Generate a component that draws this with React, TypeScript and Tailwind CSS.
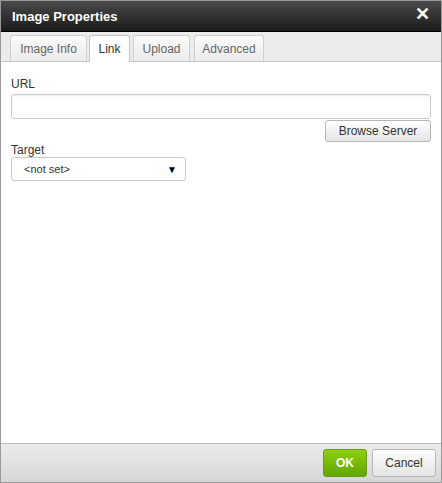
import React from 'react';

const tabs: Array<[string, string]> = [
    ['Image Info', 'w-[77px]'],
    ['Link', 'w-[41px] ml-[2px]'],
    ['Upload', 'w-[57px] ml-[3px]'],
    ['Advanced', 'w-[70px] ml-[4px]'],
];

const App: React.FC = () => (
    <div className="w-[442px] h-[483px] flex flex-col bg-white border border-[#999] font-['Liberation_Sans',Arial,sans-serif] text-[12px] text-[#333] overflow-hidden">
        {/* title */}
        <div className="h-[31px] shrink-0 flex items-center justify-between pl-[11px] pr-[11px] bg-gradient-to-b from-[#4a4a4a] to-[#1c1c1c] border-b border-black">
            <span className="text-white font-bold text-[13px] mt-[1px]">Image Properties</span>
            <span className="text-white font-bold text-[18px] leading-none -mt-[5px]">✕</span>
        </div>
        {/* tabs */}
        <div className="h-[30px] shrink-0 bg-[#ebebeb] border-b border-[#c6c6c6] flex items-end pl-[9px]">
            {tabs.map(([t, w]) => (
                <div
                    key={t}
                    className={
                        t === 'Link'
                            ? `${w} h-[27px] -mb-px justify-center flex items-center bg-white border border-b-0 border-[#c6c6c6] rounded-t-[3px] text-[#333]`
                            : `${w} h-[26px] justify-center flex items-center bg-gradient-to-b from-[#fafafa] to-[#ececec] border border-b-0 border-[#d0d0d0] rounded-t-[3px] text-[#666]`
                    }
                >
                    {t}
                </div>
            ))}
        </div>
        {/* body */}
        <div className="flex-1 bg-white px-[10px] pt-[15px] flex flex-col">
            <label className="leading-[15px] mb-[2px]">URL</label>
            <div className="h-[25px] border border-[#c9c9c9] rounded-[3px] shadow-[inset_0_1px_2px_rgba(0,0,0,0.08)]" />
            <div className="flex justify-end mt-[1px]">
                <button className="h-[22px] w-[106px] border border-[#b6b6b6] rounded-[3px] bg-gradient-to-b from-white to-[#e4e4e4] text-[#333] text-[12px]">
                    Browse Server
                </button>
            </div>
            <label className="leading-[14px] mt-[1px] mb-0">Target</label>
            <div className="h-[24px] w-[175px] border border-[#c9c9c9] rounded-[3px] flex items-center justify-between pl-[12px] pr-[8px]">
                <span className="text-[11px] text-[#333]">&lt;not set&gt;</span>
                <span className="text-[10px] text-black">▼</span>
            </div>
        </div>
        {/* footer */}
        <div className="h-[39px] shrink-0 border-t border-[#bcbcbc] bg-gradient-to-b from-[#ebebeb] to-[#d8d8d8] flex items-center justify-end gap-[5px] pr-[5px]">
            <button className="h-[28px] w-[44px] rounded-[3px] border border-[#6a9d0f] bg-gradient-to-b from-[#8fcf10] to-[#62a600] text-white font-bold text-[12px]">
                OK
            </button>
            <button className="h-[28px] w-[64px] rounded-[3px] border border-[#b6b6b6] bg-gradient-to-b from-white to-[#e4e4e4] text-[#333] text-[12px]">
                Cancel
            </button>
        </div>
    </div>
);

export default App;
